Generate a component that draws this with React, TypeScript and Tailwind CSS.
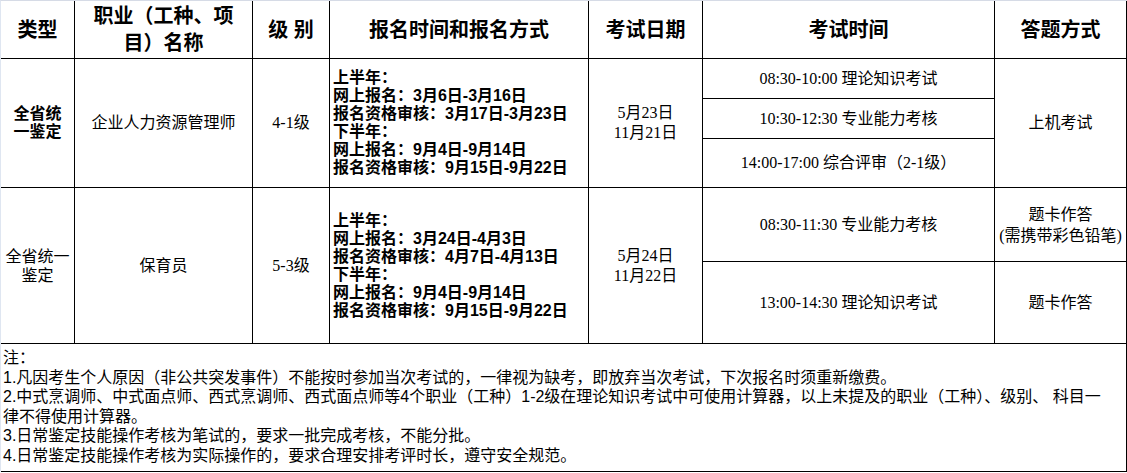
import React from "react";

// Liberation Sans first so line boxes stay within the tight 18px rows; CJK falls back to Noto
const cjk = "font-['Liberation_Sans','Noto_Sans_CJK_SC',sans-serif]";
const serif = "font-['Liberation_Serif','Noto_Sans_CJK_SC',serif]";

const cell = "border-r border-b border-black flex items-center justify-center text-center";

const RegBlock = ({ lines }: { lines: string[] }) => (
  <div className={`${cell} !justify-start text-left pl-[3px] ${cjk} font-bold text-[16px] leading-[18px]`}>
    <div>
      {lines.map((l, i) => (
        <div key={i} className="whitespace-nowrap">
          {l}
        </div>
      ))}
    </div>
  </div>
);

const notes = [
  "注：",
  "1.凡因考生个人原因（非公共突发事件）不能按时参加当次考试的，一律视为缺考，即放弃当次考试，下次报名时须重新缴费。",
  "2.中式烹调师、中式面点师、西式烹调师、西式面点师等4个职业（工种）1-2级在理论知识考试中可使用计算器，以上未提及的职业（工种）、级别、 科目一",
  "律不得使用计算器。",
  "3.日常鉴定技能操作考核为笔试的，要求一批完成考核，不能分批。",
  "4.日常鉴定技能操作考核为实际操作的，要求合理安排考评时长，遵守安全规范。",
];

export default function App() {
  return (
    <div className="w-[1127px] h-[473px] bg-white text-black">
      <div className="border-t border-l border-t-[#d6dbe6] border-l-[#dfe6f1]">
        <div className="grid grid-cols-[74px_178px_77px_259px_114px_292px_132px] grid-rows-[58px_40px_40px_49px_74px_82px_128px]">
          {/* header */}
          <div className={`${cell} ${cjk} font-bold text-[20px]`}>类型</div>
          <div className={`${cell} ${cjk} font-bold text-[20px] leading-[27px]`}>
            职业（工种、项<br />目）名称
          </div>
          <div className={`${cell} ${cjk} font-bold text-[20px]`}>级 别</div>
          <div className={`${cell} ${cjk} font-bold text-[20px]`}>报名时间和报名方式</div>
          <div className={`${cell} ${cjk} font-bold text-[20px]`}>考试日期</div>
          <div className={`${cell} ${cjk} font-bold text-[20px]`}>考试时间</div>
          <div className={`${cell} ${cjk} font-bold text-[20px]`}>答题方式</div>

          {/* row 1 */}
          <div className={`${cell} row-span-3 ${cjk} font-bold text-[16px] leading-[18px]`}>
            全省统<br />一鉴定
          </div>
          <div className={`${cell} row-span-3 ${cjk} text-[16px]`}>企业人力资源管理师</div>
          <div className={`${cell} row-span-3 ${serif} text-[16px]`}>4-1级</div>
          <div className="row-span-3 grid">
            <RegBlock
              lines={[
                "上半年：",
                "网上报名：3月6日-3月16日",
                "报名资格审核：3月17日-3月23日",
                "下半年：",
                "网上报名：9月4日-9月14日",
                "报名资格审核：9月15日-9月22日",
              ]}
            />
          </div>
          <div className={`${cell} row-span-3 ${serif} text-[16px] leading-[20px]`}>
            5月23日<br />11月21日
          </div>
          <div className={`${cell} ${serif} text-[16px]`}>08:30-10:00 理论知识考试</div>
          <div className={`${cell} row-span-3 ${cjk} text-[16px]`}>上机考试</div>
          <div className={`${cell} ${serif} text-[16px]`}>10:30-12:30 专业能力考核</div>
          <div className={`${cell} ${serif} text-[16px]`}>14:00-17:00 综合评审（2-1级）</div>

          {/* row 2 */}
          <div className={`${cell} row-span-2 ${cjk} text-[16px] leading-[19px]`}>
            全省统一<br />鉴定
          </div>
          <div className={`${cell} row-span-2 ${cjk} text-[16px]`}>保育员</div>
          <div className={`${cell} row-span-2 ${serif} text-[16px]`}>5-3级</div>
          <div className="row-span-2 grid">
            <RegBlock
              lines={[
                "上半年：",
                "网上报名：3月24日-4月3日",
                "报名资格审核：4月7日-4月13日",
                "下半年：",
                "网上报名：9月4日-9月14日",
                "报名资格审核：9月15日-9月22日",
              ]}
            />
          </div>
          <div className={`${cell} row-span-2 ${serif} text-[16px] leading-[20px]`}>
            5月24日<br />11月22日
          </div>
          <div className={`${cell} ${serif} text-[16px]`}>08:30-11:30 专业能力考核</div>
          <div className={`${cell} ${serif} text-[16px] leading-[21px]`}>
            题卡作答<br />(需携带彩色铅笔)
          </div>
          <div className={`${cell} ${serif} text-[16px]`}>13:00-14:30 理论知识考试</div>
          <div className={`${cell} ${cjk} text-[16px]`}>题卡作答</div>

          {/* notes */}
          <div className={`col-span-7 border-r border-b border-black pl-[2px] pt-[4px] ${cjk} text-[16px] leading-[19.6px]`}>
            {notes.map((n, i) => (
              <div key={i} className="whitespace-nowrap">
                {n}
              </div>
            ))}
          </div>
        </div>
      </div>
    </div>
  );
}
